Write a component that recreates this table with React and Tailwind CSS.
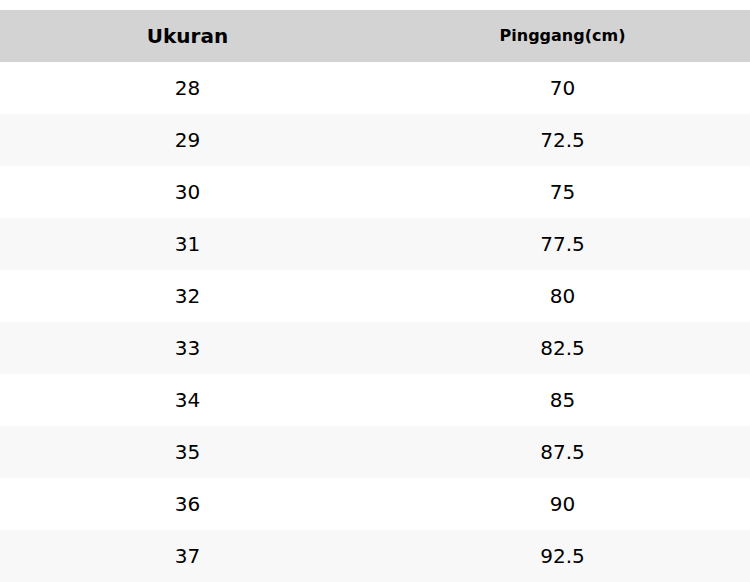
import React from "react";

const rows = [
  ["28", "70"],
  ["29", "72.5"],
  ["30", "75"],
  ["31", "77.5"],
  ["32", "80"],
  ["33", "82.5"],
  ["34", "85"],
  ["35", "87.5"],
  ["36", "90"],
  ["37", "92.5"],
];

export default function App() {
  return (
    <div
      className="w-[750px] h-[582px] bg-white pt-[10px] overflow-hidden text-black"
      style={{ fontFamily: '"DejaVu Sans", Verdana, sans-serif' }}
    >
      <table className="w-full border-collapse table-fixed">
        <thead>
          <tr className="bg-[#d3d3d3] h-[52px]">
            <th className="w-1/2 text-center text-[20px] font-bold">Ukuran</th>
            <th className="w-1/2 text-center text-[16px] font-bold">Pinggang(cm)</th>
          </tr>
        </thead>
        <tbody>
          {rows.map(([size, waist], i) => (
            <tr
              key={size}
              className={`h-[52px] ${i % 2 === 1 ? "bg-[#f8f8f8]" : "bg-white"}`}
            >
              <td className="text-center text-[20px]">{size}</td>
              <td className="text-center text-[20px]">{waist}</td>
            </tr>
          ))}
        </tbody>
      </table>
    </div>
  );
}
